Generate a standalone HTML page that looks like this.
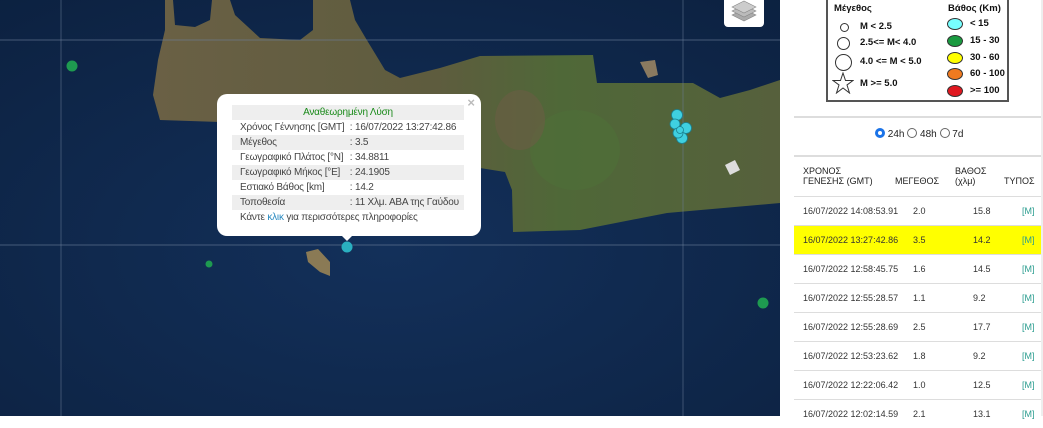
<!DOCTYPE html>
<html><head><meta charset="utf-8"><style>
*{margin:0;padding:0;box-sizing:border-box}
body{width:1043px;height:416px;overflow:hidden;position:relative;font-family:"Liberation Sans",sans-serif;background:#fff}
#map{position:absolute;left:0;top:0;width:780px;height:416px;background:#0f2747;overflow:hidden}
.pop{position:absolute;left:217px;top:94px;width:264px;height:142px;background:#fff;border-radius:10px;font-size:10px;color:#444}
.pop table{position:absolute;left:15px;top:11px;width:232px;border-collapse:collapse}
.pop td{height:15px;padding:0 0 0 8px;white-space:nowrap;letter-spacing:-0.2px}
.pop tr.g td{background:#eee}
.pop td.c{padding-left:0}
#panel{position:absolute;left:780px;top:0;width:263px;height:416px;background:#fff;font-size:9px;color:#222}
.leg{position:absolute;left:46px;top:-2px;width:183px;height:104px;border:2px solid #555;font-weight:bold;font-size:9.5px;color:#111}
.leg span{position:absolute;white-space:nowrap}
.c0{position:absolute;border:1px solid #333;border-radius:50%}
.row{position:absolute;left:14px;width:248px;height:29px;border-top:1px solid #ddd;font-size:9px;color:#333}
.row span{position:absolute;top:9px}
.m{color:#2a9d8f}
</style></head><body>
<div id="map">
<svg width="780" height="416" style="position:absolute;left:0;top:0">
<defs>
<radialGradient id="sea" cx="0.5" cy="0.6" r="0.8"><stop offset="0" stop-color="#13305a"/><stop offset="1" stop-color="#0c2140"/></radialGradient>
<linearGradient id="land" x1="0" x2="1"><stop offset="0" stop-color="#6a6045"/><stop offset="0.45" stop-color="#5e5c3e"/><stop offset="0.65" stop-color="#4f6838"/><stop offset="1" stop-color="#56603c"/></linearGradient>
</defs>
<rect width="780" height="416" fill="url(#sea)"/>
<path d="M165,0 L173,0 L175,25 L195,27 L210,20 L212,0 L230,0 L235,15 L260,38 L300,40 L313,30 L313,0 L350,0 L355,20 L365,37 L385,70 L400,78 L440,68 L480,56 L593,55 L597,83 L693,83 L720,98 L750,90 L780,80 L780,203 L667,213 L580,230 L513,232 L512,190 L505,172 L480,168 L480,200 L230,200 L220,122 L160,120 L153,95 L158,60 L165,30 Z" fill="url(#land)"/>
<ellipse cx="575" cy="150" rx="45" ry="40" fill="#4e7038" opacity="0.6"/>
<ellipse cx="520" cy="120" rx="25" ry="30" fill="#6b5e45" opacity="0.6"/>
<path d="M725,165 L735,160 L740,170 L730,175Z" fill="#ddd"/>
<path d="M640,62 L655,60 L658,75 L648,78 Z" fill="#8a7a60"/>
<path d="M306,252 L318,249 L330,262 L330,276 L320,272 L308,262 Z" fill="#8a7a55"/>
<line x1="0" y1="40" x2="780" y2="40" stroke="#6c7f9a" stroke-width="1" opacity="0.6"/>
<line x1="0" y1="245" x2="780" y2="245" stroke="#6c7f9a" stroke-width="1" opacity="0.6"/>
<line x1="61" y1="0" x2="61" y2="416" stroke="#6c7f9a" stroke-width="1" opacity="0.5"/>
<line x1="683" y1="0" x2="683" y2="416" stroke="#6c7f9a" stroke-width="1" opacity="0.5"/>
<circle cx="72" cy="66" r="5.5" fill="#1e9a50"/>
<circle cx="209" cy="264" r="3.5" fill="#1e9a50"/>
<circle cx="763" cy="303" r="5.5" fill="#1e9a50"/>
<circle cx="347" cy="247" r="5.5" fill="#2ab0c0"/>
<g fill="#3fd0e0" stroke="#1a8090" stroke-width="0.8">
<circle cx="677" cy="115" r="5.5"/><circle cx="686" cy="128" r="5.5"/><circle cx="675" cy="124" r="5"/><circle cx="682" cy="138" r="5.5"/><circle cx="678" cy="133" r="5"/><circle cx="680" cy="130" r="3.5"/></g>
</svg>
<div style="position:absolute;left:724px;top:-4px;width:40px;height:31px;background:#fff;border-radius:4px">
<svg width="40" height="31"><g fill="#aaa" stroke="#888" stroke-width="0.6"><path d="M8,19 L20,13 L32,19 L20,25Z"/><path d="M8,15 L20,9 L32,15 L20,21Z" fill="#bbb"/><path d="M8,11 L20,5 L32,11 L20,17Z" fill="#ccc"/></g></svg></div>
<div class="pop">
<div style="position:absolute;right:6px;top:1px;color:#bbb;font-size:13px;font-weight:bold">×</div>
<table>
<tr class="g"><td colspan="2" style="text-align:center;color:#1a8a1a;padding:0">Αναθεωρημένη Λύση</td></tr>
<tr><td>Χρόνος Γέννησης [GMT]</td><td class="c">: 16/07/2022 13:27:42.86</td></tr>
<tr class="g"><td>Μέγεθος</td><td class="c">: 3.5</td></tr>
<tr><td>Γεωγραφικό Πλάτος [°N]</td><td class="c">: 34.8811</td></tr>
<tr class="g"><td>Γεωγραφικό Μήκος [°E]</td><td class="c">: 24.1905</td></tr>
<tr><td>Εστιακό Βάθος [km]</td><td class="c">: 14.2</td></tr>
<tr class="g"><td>Τοποθεσία</td><td class="c">: 11 Χλμ. ΑΒΑ της Γαύδου</td></tr>
<tr><td colspan="2">Κάντε <span style="color:#2a8ac0">κλικ</span> για περισσότερες πληροφορίες</td></tr>
</table></div>
<div style="position:absolute;left:340px;top:234px;width:0;height:0;border-left:7px solid transparent;border-right:7px solid transparent;border-top:7px solid #fff"></div>
</div>
<div id="panel">
<div class="leg">
<span style="left:6px;top:3px">Μέγεθος</span><span style="left:120px;top:3px">Βάθος (Km)</span>
<div class="c0" style="left:12px;top:23px;width:9px;height:9px"></div><span style="left:32px;top:21px">M &lt; 2.5</span>
<div class="c0" style="left:9px;top:37px;width:13px;height:13px"></div><span style="left:32px;top:37px">2.5&lt;= M&lt; 4.0</span>
<div class="c0" style="left:7px;top:54px;width:17px;height:17px"></div><span style="left:32px;top:56px">4.0 &lt;= M &lt; 5.0</span>
<svg style="position:absolute;left:4px;top:72px" width="22" height="22"><path d="M11,1 L13.5,8.5 L21,8.5 L15,13 L17.5,21 L11,16 L4.5,21 L7,13 L1,8.5 L8.5,8.5Z" fill="none" stroke="#333"/></svg>
<span style="left:32px;top:78px">M &gt;= 5.0</span>
<div class="c0" style="left:119px;top:18px;width:16px;height:12px;background:#7ff"></div><span style="left:142px;top:18px">&lt; 15</span>
<div class="c0" style="left:119px;top:35px;width:16px;height:12px;background:#1a9a40"></div><span style="left:142px;top:35px">15 - 30</span>
<div class="c0" style="left:119px;top:52px;width:16px;height:12px;background:#ff0"></div><span style="left:142px;top:52px">30 - 60</span>
<div class="c0" style="left:119px;top:68px;width:16px;height:12px;background:#f07a20"></div><span style="left:142px;top:68px">60 - 100</span>
<div class="c0" style="left:119px;top:85px;width:16px;height:12px;background:#e01820"></div><span style="left:142px;top:85px">&gt;= 100</span>
</div>
<div style="position:absolute;left:14px;top:116px;width:248px;border-top:2px solid #ddd"></div>
<div style="position:absolute;left:95px;top:128px;font-size:10px;white-space:nowrap">
<span style="display:inline-block;width:10px;height:10px;border-radius:50%;border:3px solid #1a73e8;vertical-align:-1px"></span> 24h <span style="display:inline-block;width:10px;height:10px;border-radius:50%;border:1px solid #666;vertical-align:-1px"></span> 48h <span style="display:inline-block;width:10px;height:10px;border-radius:50%;border:1px solid #666;vertical-align:-1px"></span> 7d</div>
<div style="position:absolute;left:14px;top:155px;width:248px;border-top:2px solid #ddd"></div>
<div style="position:absolute;left:23px;top:166px;line-height:10px">ΧΡΟΝΟΣ<br>ΓΕΝΕΣΗΣ (GMT)</div>
<div style="position:absolute;left:115px;top:176px">ΜΕΓΕΘΟΣ</div>
<div style="position:absolute;left:175px;top:166px;line-height:10px">ΒΑΘΟΣ<br>(χλμ)</div>
<div style="position:absolute;left:224px;top:176px">ΤΥΠΟΣ</div>
<div class="row" style="top:196px"><span style="left:9px">16/07/2022 14:08:53.91</span><span style="left:119px">2.0</span><span style="left:179px">15.8</span><span class="m" style="left:228px">[M]</span></div>
<div class="row" style="top:225px;background:#ff0"><span style="left:9px">16/07/2022 13:27:42.86</span><span style="left:119px">3.5</span><span style="left:179px">14.2</span><span class="m" style="left:228px">[M]</span></div>
<div class="row" style="top:254px"><span style="left:9px">16/07/2022 12:58:45.75</span><span style="left:119px">1.6</span><span style="left:179px">14.5</span><span class="m" style="left:228px">[M]</span></div>
<div class="row" style="top:283px"><span style="left:9px">16/07/2022 12:55:28.57</span><span style="left:119px">1.1</span><span style="left:179px">9.2</span><span class="m" style="left:228px">[M]</span></div>
<div class="row" style="top:312px"><span style="left:9px">16/07/2022 12:55:28.69</span><span style="left:119px">2.5</span><span style="left:179px">17.7</span><span class="m" style="left:228px">[M]</span></div>
<div class="row" style="top:341px"><span style="left:9px">16/07/2022 12:53:23.62</span><span style="left:119px">1.8</span><span style="left:179px">9.2</span><span class="m" style="left:228px">[M]</span></div>
<div class="row" style="top:370px"><span style="left:9px">16/07/2022 12:22:06.42</span><span style="left:119px">1.0</span><span style="left:179px">12.5</span><span class="m" style="left:228px">[M]</span></div>
<div class="row" style="top:399px"><span style="left:9px">16/07/2022 12:02:14.59</span><span style="left:119px">2.1</span><span style="left:179px">13.1</span><span class="m" style="left:228px">[M]</span></div>
<div style="position:absolute;left:261px;top:0;width:2px;height:416px;background:#eee"></div>
</div>
</body></html>
